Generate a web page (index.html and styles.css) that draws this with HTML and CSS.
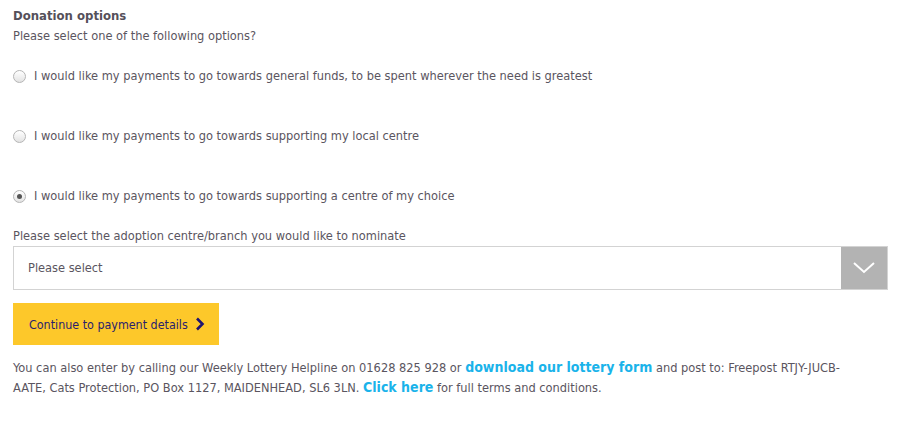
FILE: index.html
```html
<!DOCTYPE html>
<html lang="en">
<head>
  <meta charset="UTF-8">
  <title>Donation options</title>
  <link rel="stylesheet" href="styles.css">
</head>
<body>
  <div class="form">
    <h3>Donation options</h3>
    <div class="intro">Please select one of the following options?</div>

    <div class="options">
      <label class="option"><span class="radio"></span>I would like my payments to go towards general funds, to be spent wherever the need is greatest</label>
      <label class="option"><span class="radio"></span>I would like my payments to go towards supporting my local centre</label>
      <label class="option"><span class="radio checked"></span>I would like my payments to go towards supporting a centre of my choice</label>
    </div>

    <div class="field-label">Please select the adoption centre/branch you would like to nominate</div>
    <div class="select">
      <span class="select-text">Please select</span>
      <span class="select-arrow">
        <svg width="24" height="14" viewBox="0 0 24 14"><path d="M2 2 L12 11 L22 2" fill="none" stroke="#fff" stroke-width="2"/></svg>
      </span>
    </div>

    <button class="btn">Continue to payment details
      <svg width="10" height="14" viewBox="0 0 10 14"><path d="M2 1.5 L7.5 7 L2 12.5" fill="none" stroke="#1e1470" stroke-width="2.6"/></svg>
    </button>

    <p class="note">You can also enter by calling our Weekly Lottery Helpline on 01628 825 928 or <a href="#">download our lottery form</a> and post to: Freepost RTJY-JUCB-AATE, Cats Protection, PO Box 1127, MAIDENHEAD, SL6 3LN. <a href="#">Click here</a> for full terms and conditions.</p>
  </div>
</body>
</html>
```

FILE: styles.css
```css
html, body {
  margin: 0;
  background: #fff;
  color: #5a5560;
  font-family: "DejaVu Sans Condensed", "DejaVu Sans", sans-serif;
  font-size: 12.7px;
}
.form {
  padding: 6px 14px 0 13px;
}
h3 {
  margin: 0;
  font-size: 13px;
  font-weight: bold;
  line-height: 20px;
  color: #55505a;
}
.intro {
  line-height: 20px;
}
.options {
  display: flex;
  flex-direction: column;
  gap: 40px;
  margin-top: 20px;
}
.option {
  display: flex;
  align-items: center;
  line-height: 20px;
}
.radio {
  width: 11px;
  height: 11px;
  border: 1px solid #b5b5b5;
  border-radius: 50%;
  background: linear-gradient(#fff, #e3e3e3);
  margin-right: 8px;
  display: flex;
  align-items: center;
  justify-content: center;
}
.radio.checked::after {
  content: "";
  width: 5px;
  height: 5px;
  border-radius: 50%;
  background: #555;
}
.field-label {
  margin-top: 20px;
  line-height: 20px;
}
.select {
  display: flex;
  justify-content: space-between;
  height: 42px;
  border: 1px solid #d3d3d3;
}
.select-text {
  padding-left: 14px;
  line-height: 42px;
}
.select-arrow {
  width: 46px;
  background: #b3b3b3;
  display: flex;
  align-items: center;
  justify-content: center;
}
.btn {
  display: flex;
  align-items: center;
  gap: 7px;
  margin-top: 13px;
  height: 42px;
  padding: 0 14px 0 16px;
  background: #fdc82a;
  border: none;
  color: #2a1e6e;
  font-family: inherit;
  font-size: 12.4px;
  cursor: pointer;
}
.note {
  margin: 13px 0 0;
  max-width: 850px;
  line-height: 20px;
}
.note a {
  color: #1ab3ea;
  font-weight: bold;
  font-size: 14px;
  line-height: 16px;
  text-decoration: none;
}
```
